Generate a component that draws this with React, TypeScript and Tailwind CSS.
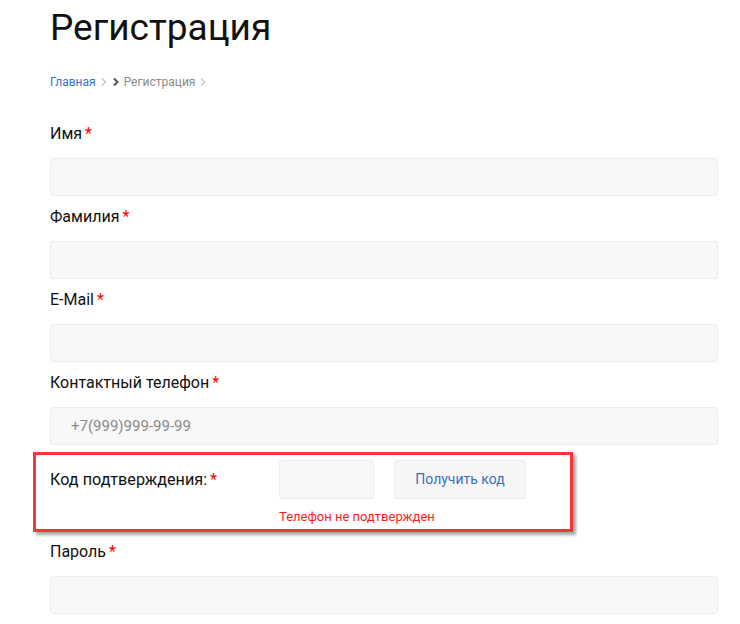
import React from "react";

const Star = () => <span className="text-[#ff0000] ml-[3px]">*</span>;

function Field({ label, placeholder }: { label: string; placeholder?: string }) {
  return (
    <div className="flex flex-col">
      <div className="pt-[1px] text-[16px] leading-[20px] text-[#111]">
        {label}
        <Star />
      </div>
      <div className="mt-[14px] h-[38px] rounded-[3px] border border-[#ececec] bg-[#f8f8f8] flex items-center pl-[20px] text-[15px] text-[#8a8a8a]">
        {placeholder}
      </div>
    </div>
  );
}

const Chevron = ({ color }: { color: string }) => (
  <svg width="8" height="10" viewBox="0 0 8 10" className="mx-[4px]">
    <path d="M2 1.5 L5.5 5 L2 8.5" fill="none" stroke={color} strokeWidth="1.3" />
  </svg>
);

export default function App() {
  return (
    <div
      className="w-[740px] h-[624px] overflow-hidden bg-white pl-[50px] pr-[22px]"
      style={{ fontFamily: "Roboto, 'Noto Sans', sans-serif" }}
    >
      <h1 className="pt-[8px] text-[37px] leading-[40px] text-[#111] font-normal">Регистрация</h1>
      <div className="mt-[26px] flex items-center text-[12px] leading-[16px]">
        <span className="text-[#3a6fc4]">Главная</span>
        <Chevron color="#c4c4c4" />
        <svg width="8" height="10" viewBox="0 0 8 10" className="mr-[4px]">
          <path d="M2 1.5 L5.5 5 L2 8.5" fill="none" stroke="#555" strokeWidth="2" />
        </svg>
        <span className="text-[#8a8a8a]">Регистрация</span>
        <Chevron color="#c4c4c4" />
      </div>
      <div className="mt-[33px] flex flex-col gap-[10px]">
        <Field label="Имя" />
        <Field label="Фамилия" />
        <Field label="E-Mail" />
        <Field label="Контактный телефон" placeholder="+7(999)999-99-99" />
      </div>
      <div className="mt-[7px] ml-[-17px] w-[540px] border-[3px] border-[#fb3434] shadow-[3px_3px_3px_rgba(0,0,0,0.35)] pl-[14px] pt-[5px] pb-[4px]">
        <div className="flex items-center h-[39px]">
          <div className="w-[229px] text-[16.2px] leading-[20px] text-[#111]">
            Код подтверждения:
            <Star />
          </div>
          <div className="w-[95px] h-[39px] rounded-[3px] border border-[#ececec] bg-[#f8f8f8]" />
          <div className="ml-[20px] w-[132px] h-[39px] rounded-[3px] border border-[#ececec] bg-[#f6f6f6] flex items-center justify-center text-[14px] text-[#3a6fc4]">
            Получить код
          </div>
        </div>
        <div className="mt-[10px] ml-[229px] text-[13px] leading-[16px] text-[#ff1a1a]">Телефон не подтвержден</div>
      </div>
      <div className="mt-[9px]">
        <Field label="Пароль" />
      </div>
    </div>
  );
}
